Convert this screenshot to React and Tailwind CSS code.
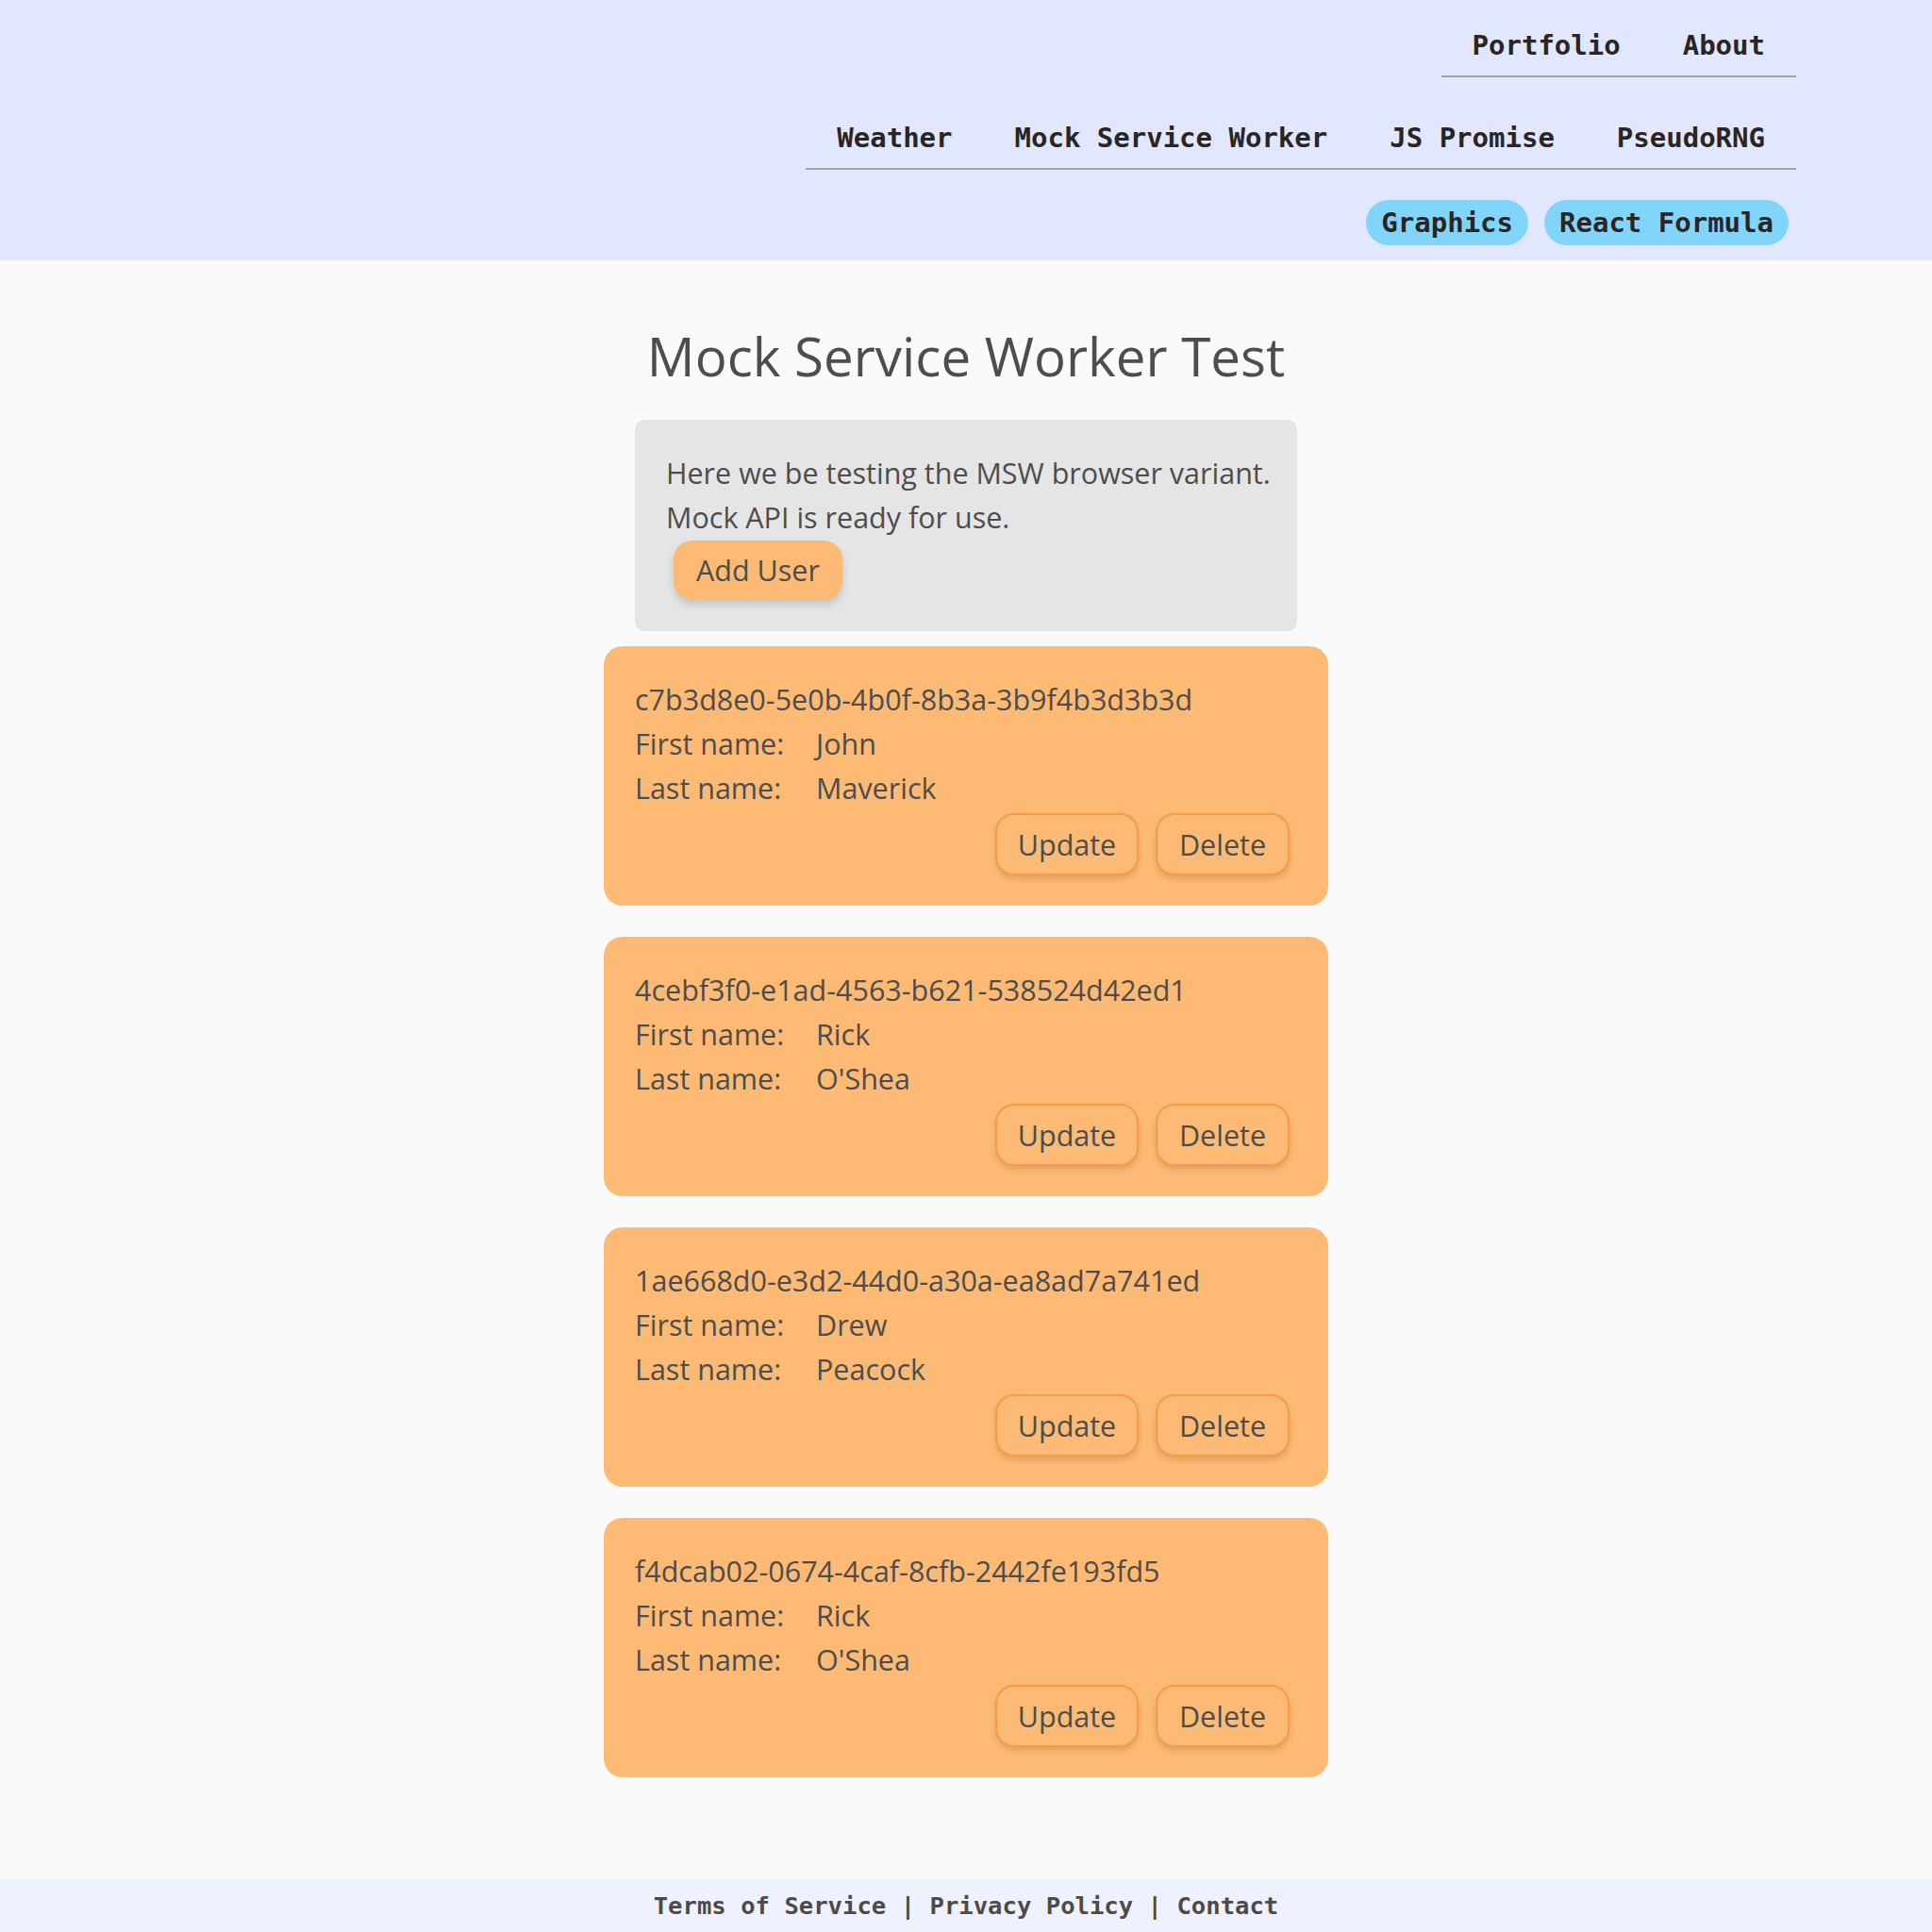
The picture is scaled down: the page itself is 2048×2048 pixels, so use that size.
import React from "react";

const mono = "font-['DejaVu_Sans_Mono','Liberation_Mono',monospace]";
const sans = "font-['Segoe_UI','Open_Sans','Noto_Sans',sans-serif]";

const users = [
  { id: "c7b3d8e0-5e0b-4b0f-8b3a-3b9f4b3d3b3d", first: "John", last: "Maverick" },
  { id: "4cebf3f0-e1ad-4563-b621-538524d42ed1", first: "Rick", last: "O'Shea" },
  { id: "1ae668d0-e3d2-44d0-a30a-ea8ad7a741ed", first: "Drew", last: "Peacock" },
  { id: "f4dcab02-0674-4caf-8cfb-2442fe193fd5", first: "Rick", last: "O'Shea" },
];

function CardButton({ children, w }) {
  return (
    <button
      className={`${w} h-[66px] flex items-center justify-center rounded-[20px] border-2 border-[#fb9a45] bg-[#fdba74] text-[30.5px] leading-[47px] text-[#4d4d4d] shadow-[0_4px_6px_rgba(0,0,0,0.12)]`}
    >
      {children}
    </button>
  );
}

function UserCard({ u }) {
  return (
    <div className="w-[768px] rounded-[20px] bg-[#fdba74] pl-[33px] pr-[41px] pt-[33px] pb-[32px] text-[30.5px] leading-[47px] text-[#4d4d4d]">
      <div>{u.id}</div>
      <div className="flex">
        <span className="w-[192px]">First name:</span>
        <span>{u.first}</span>
      </div>
      <div className="flex">
        <span className="w-[192px]">Last name:</span>
        <span>{u.last}</span>
      </div>
      <div className="mt-[3px] flex justify-end gap-[18px]">
        <CardButton w="w-[152px]">Update</CardButton>
        <CardButton w="w-[142px]">Delete</CardButton>
      </div>
    </div>
  );
}

export default function App() {
  return (
    <div className={`min-h-screen flex flex-col bg-[#fafafa] ${sans}`}>
      <header className={`h-[276px] bg-[#e0e7ff] flex flex-col items-end pr-[144px] ${mono} font-bold text-[29px] leading-[34px] text-[#2a2522]`}>
        <nav className="flex border-b-2 border-[#a3a3a3] pt-[31px] pb-[15px]">
          <a className="px-[33px]">Portfolio</a>
          <a className="px-[33px]">About</a>
        </nav>
        <nav className="flex border-b-2 border-[#a3a3a3] pt-[47px] pb-[15px]">
          <a className="px-[33px]">Weather</a>
          <a className="px-[33px]">Mock Service Worker</a>
          <a className="px-[33px]">JS Promise</a>
          <a className="px-[33px]">PseudoRNG</a>
        </nav>
        <div className="flex gap-[17px] pr-[8px] mt-[32px]">
          <span className="h-[48px] flex items-center rounded-full bg-[#81d4fa] px-[16px]">Graphics</span>
          <span className="h-[48px] flex items-center rounded-full bg-[#81d4fa] px-[16px]">React Formula</span>
        </div>
      </header>

      <main className="flex-1 flex flex-col items-center pb-[40px]">
        <h1 className="mt-[67px] text-[56.5px] leading-[70px] font-normal text-[#4d4d4d]">
          Mock Service Worker Test
        </h1>
        <div className="mt-[32px] w-[702px] rounded-[10px] bg-[#e5e5e5] px-[33px] pt-[33px] pb-[33px] text-[30.5px] leading-[47px] text-[#4d4d4d] whitespace-nowrap">
          <div>Here we be testing the MSW browser variant.</div>
          <div>Mock API is ready for use.</div>
          <button className="ml-[8px] mt-[1px] h-[63px] px-[24px] rounded-[20px] bg-[#fdba74] text-[#4d4d4d] shadow-[0_5px_8px_rgba(0,0,0,0.15)]">
            Add User
          </button>
        </div>
        <div className="mt-[16px] flex flex-col gap-[33px]">
          {users.map((u) => (
            <UserCard key={u.id} u={u} />
          ))}
        </div>
      </main>

      <footer className={`h-[56px] bg-[#eef2ff] flex items-center justify-center ${mono} font-bold text-[25.6px] text-[#4f4a47] whitespace-pre`}>
        Terms of Service | Privacy Policy | Contact
      </footer>
    </div>
  );
}
